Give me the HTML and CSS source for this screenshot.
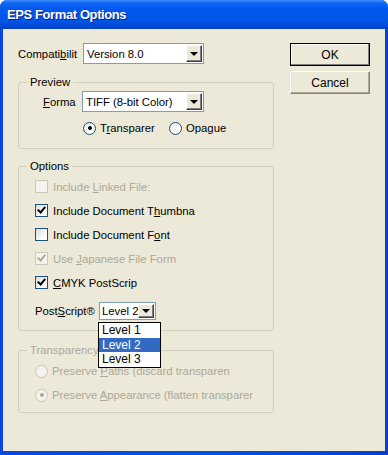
FILE: index.html
```html
<!DOCTYPE html>
<html lang="en">
<head>
  <meta charset="UTF-8">
  <title>EPS Format Options</title>
  <link rel="stylesheet" href="styles.css">
</head>
<body>

  <div class="window">
    <div class="titlebar">EPS Format Options</div>

    <div class="client">
      <div class="left">

        <div class="row top-row">
          <span class="label w-compat">Compati<u>b</u>ilit</span>
          <div class="select w-compat-sel">
            <span class="value">Version 8.0</span>
            <span class="arrow"></span>
          </div>
        </div>

        <div class="group preview">
          <div class="legend">Preview</div>
          <div class="row fmt-row">
            <span class="label w-format"><u>F</u>orma</span>
            <div class="select w-format-sel">
              <span class="value">TIFF (8-bit Color)</span>
              <span class="arrow"></span>
            </div>
          </div>
          <div class="row radio-row">
            <span class="radio-item w-transp"><span class="radio on"></span><span>T<u>r</u>ansparer</span></span>
            <span class="radio-item"><span class="radio"></span><span>Opa<u>g</u>ue</span></span>
          </div>
        </div>

        <div class="group options">
          <div class="legend">Options</div>
          <div class="check-item disabled"><span class="check"></span><span>Include <u>L</u>inked File:</span></div>
          <div class="check-item"><span class="check on"></span><span>Include Document T<u>h</u>umbna</span></div>
          <div class="check-item"><span class="check"></span><span>Include Document F<u>o</u>nt</span></div>
          <div class="check-item disabled"><span class="check on"></span><span>Use <u>J</u>apanese File Form</span></div>
          <div class="check-item"><span class="check on"></span><span><u>C</u>MYK PostScrip</span></div>
          <div class="row ps-row">
            <span class="label w-ps">Post<u>S</u>cript®</span>
            <div class="select ps-select">
              <span class="value">Level 2</span>
              <span class="arrow"></span>
              <ul class="droplist">
                <li>Level 1</li>
                <li class="selected">Level 2</li>
                <li>Level 3</li>
              </ul>
            </div>
          </div>
        </div>

        <div class="group transparency disabled">
          <div class="legend">Transparency</div>
          <div class="radio-item"><span class="radio"></span><span>Preserve <u>P</u>aths (discard transparen</span></div>
          <div class="radio-item"><span class="radio on"></span><span>Preserve <u>A</u>ppearance (flatten transparer</span></div>
        </div>

      </div>

      <div class="buttons">
        <button class="btn default">OK</button>
        <button class="btn">Cancel</button>
      </div>
    </div>
  </div>

</body>
</html>
```

FILE: styles.css
```css
body {
  margin: 0;
  font-family: 'Liberation Sans', Arial, sans-serif;
  font-size: 11.3px;
  color: #000;
  background: #fff;
}

.window {
  width: 388px;
  height: 455px;
  display: flex;
  flex-direction: column;
  background: linear-gradient(90deg, #0a46e0, #0054e3 50%, #0840d0);
  border-radius: 7px 7px 0 0;
  overflow: hidden;
}

.titlebar {
  height: 29px;
  flex: none;
  box-sizing: border-box;
  padding: 8px 0 0 7px;
  line-height: 14px;
  color: #fff;
  font-weight: bold;
  font-size: 13px;
  letter-spacing: -0.4px;
  text-shadow: 1px 1px 0 #0a1e8c;
  background: linear-gradient(#3d8ffb 0, #0f66f2 3px, #0058ee 9px, #0056e8 20px, #0049d4 26px, #0040c4 29px);
}

.client {
  flex: 1;
  margin: 0 3px 4px 3px;
  background: #ece9d8;
  display: flex;
  padding: 14px 0 0 15px;
}

.left {
  width: 256px;
}

.row {
  display: flex;
  align-items: center;
}

.label {
  white-space: nowrap;
}

u {
  text-decoration: underline;
  text-underline-offset: 1px;
}

.w-compat { width: 65px; }
.w-format { width: 39px; }
.w-ps { width: 64px; }

/* combo boxes */
.select {
  position: relative;
  height: 21px;
  box-sizing: border-box;
  background: #fff;
  border: 1px solid #7f9db9;
  display: flex;
  align-items: center;
  padding: 1px;
}

.w-compat-sel { width: 121px; }
.w-format-sel { width: 122px; }

.select .value {
  flex: 1;
  padding-left: 2px;
  white-space: nowrap;
}

.arrow {
  width: 16px;
  height: 17px;
  box-sizing: border-box;
  background: #ece9d8;
  border-top: 1px solid #fff;
  border-left: 1px solid #fff;
  border-right: 1px solid #404040;
  border-bottom: 1px solid #404040;
  box-shadow: inset -1px -1px 0 #808080;
  position: relative;
}

.arrow::after {
  content: "";
  position: absolute;
  left: 3px;
  top: 6px;
  border-left: 4px solid transparent;
  border-right: 4px solid transparent;
  border-top: 4px solid #000;
}

/* group boxes */
.group {
  position: relative;
  box-sizing: border-box;
  border: 1px solid #d0d0bf;
  border-radius: 3px;
}

.legend {
  position: absolute;
  top: -8px;
  left: 8px;
  background: #ece9d8;
  padding: 0 3px;
  line-height: 14px;
}

.preview {
  margin-top: 18px;
  height: 67px;
  padding: 8px 0 0 24px;
}

.fmt-row {
  margin-bottom: 9px;
}

.radio-row {
  padding-left: 40px;
  height: 14px;
}

.radio-item {
  display: flex;
  align-items: center;
  gap: 4px;
  white-space: nowrap;
  height: 14px;
}

.w-transp { width: 86px; }

.radio {
  width: 13px;
  height: 13px;
  box-sizing: border-box;
  border-radius: 50%;
  border: 1px solid #1c5180;
  background: radial-gradient(circle at 60% 60%, #fff 35%, #dcdcd3);
  position: relative;
  flex: none;
}

.radio.on::after {
  content: "";
  position: absolute;
  left: 3.5px;
  top: 3.5px;
  width: 4px;
  height: 4px;
  border-radius: 50%;
  background: #000;
}

.options {
  margin-top: 17px;
  height: 165px;
  padding: 13px 0 0 16px;
}

.check-item {
  display: flex;
  align-items: center;
  gap: 5px;
  height: 13px;
  margin-bottom: 11px;
  white-space: nowrap;
}

.check {
  width: 13px;
  height: 13px;
  box-sizing: border-box;
  border: 1px solid #1c5180;
  background: linear-gradient(135deg, #dcdcd7, #fff 80%);
  position: relative;
  flex: none;
}

.check.on::after {
  content: "";
  position: absolute;
  left: 3px;
  top: 0px;
  width: 3px;
  height: 6px;
  border-right: 2px solid #000;
  border-bottom: 2px solid #000;
  transform: rotate(40deg);
}

.disabled {
  color: #aca899;
}

.disabled .check {
  border-color: #cac8bb;
  background: #f4f3ee;
}

.disabled .check.on::after {
  border-color: #aca899;
}

.ps-row {
  margin-top: 13px;
}

.ps-select {
  width: 57px;
  height: 18px;
}

.ps-select .value {
  padding-left: 1px;
}

.ps-select .arrow {
  width: 16px;
  height: 14px;
}

.ps-select .arrow::after {
  top: 4px;
}

.droplist {
  position: absolute;
  top: 19px;
  left: -2px;
  width: 61px;
  margin: 0;
  padding: 0;
  list-style: none;
  background: #fff;
  border: 1px solid #000;
  z-index: 2;
}

.droplist li {
  height: 14.7px;
  line-height: 14.7px;
  padding-left: 3px;
  font-size: 12px;
}

.droplist .selected {
  background: #316ac5;
  color: #fff;
}

.transparency {
  margin-top: 19px;
  height: 63px;
  padding: 13px 0 0 16px;
}

.transparency .radio-item {
  margin-bottom: 10px;
}

.transparency .radio {
  border-color: #cac8bb;
  background: #f4f3ee;
}

.transparency .radio.on::after {
  background: #aca899;
}

/* buttons */
.buttons {
  display: flex;
  flex-direction: column;
  gap: 5px;
  margin-left: 16px;
}

.btn {
  width: 80px;
  height: 23px;
  box-sizing: border-box;
  font-family: 'Liberation Sans', Arial, sans-serif;
  font-size: 12px;
  padding: 0;
  background: #ece9d8;
  border: 1px solid;
  border-color: #fff #808080 #808080 #fff;
  border-radius: 0;
  box-shadow: inset -1px -1px 0 #aca899;
}

.btn.default {
  border: 1px solid #000;
  box-shadow: inset -1px -1px 0 #808080, inset 1px 1px 0 #fff;
}
```
